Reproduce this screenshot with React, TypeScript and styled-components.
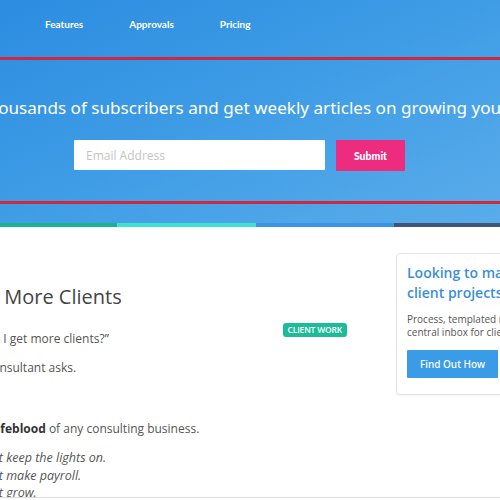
import React from "react";
import styled, { createGlobalStyle } from "styled-components";

const Global = createGlobalStyle`
  html, body { margin: 0; padding: 0; background: #fff; overflow: hidden; }
  body { font-family: "Open Sans", "Liberation Sans", sans-serif; }
  * { box-sizing: border-box; }
`;

const Page = styled.div`
  width: 500px;
  height: 500px;
  overflow: hidden;
  position: relative;
  background: #fff;
`;

const Hero = styled.header`
  background: linear-gradient(to bottom right, #2c8ce0 0%, #3f9de6 50%, #5aacea 100%);
  padding-bottom: 19px;
`;

const Nav = styled.nav`
  display: flex;
  gap: 46px;
  padding: 16px 0 0 45px;
  height: 57px;
`;

const NavItem = styled.a`
  font-family: "Lato", "Open Sans", sans-serif;
  font-size: 10px;
  font-weight: 700;
  line-height: 16px;
  color: #fff;
  text-decoration: none;
`;

const Subscribe = styled.section`
  border-top: 3px solid #cd2a3f;
  border-bottom: 3px solid #cd2a3f;
  padding: 35px 0 30px;
  overflow: hidden;
`;

const Headline = styled.h2`
  margin: 0;
  font-family: "Noto Sans", "Open Sans", sans-serif;
  font-weight: 400;
  font-size: 17.1px;
  line-height: 26px;
  color: #fff;
  white-space: nowrap;
  text-indent: -53px;
`;

const Form = styled.form`
  display: flex;
  gap: 11px;
  margin: 19px 0 0 74px;
`;

const EmailInput = styled.input`
  width: 251px;
  height: 30px;
  border: none;
  border-radius: 1px;
  padding: 0 12px;
  font-family: "Open Sans", sans-serif;
  font-size: 12px;
  color: #333;
  background: #fff;
  outline: none;
  &::placeholder { color: #c4c4c4; }
`;

const SubmitButton = styled.button`
  width: 69px;
  height: 31px;
  border: none;
  border-radius: 1px;
  background: #ee2c7f;
  color: #fff;
  font-family: "Lato", "Open Sans", sans-serif;
  font-weight: 900;
  font-size: 10.5px;
`;

const Stripes = styled.div`
  display: grid;
  grid-template-columns: 117px 139px 138px 1fr;
  height: 4px;
`;

const Stripe = styled.div<{ $c: string }>`
  background: ${(p) => p.$c};
`;

const Main = styled.main`
  display: flex;
  gap: 49px;
  padding-top: 26px;
`;

const Article = styled.article`
  flex: 0 0 394px;
  margin-left: -47px;
  padding-top: 30px;
  font-family: "Open Sans", sans-serif;
  color: #555;
`;

const Title = styled.h1`
  margin: 0;
  font-size: 20px;
  font-weight: 400;
  line-height: 28px;
  color: #444;
  white-space: nowrap;
`;

const LeadRow = styled.div`
  display: flex;
  justify-content: space-between;
  align-items: flex-start;
  margin-top: 12px;
`;

const Badge = styled.span`
  display: inline-block;
  height: 14px;
  padding: 0 5px;
  border-radius: 3px;
  background: #1dbb98;
  color: #fff;
  font-size: 8.5px;
  font-weight: 600;
  line-height: 14px;
  text-transform: uppercase;
  letter-spacing: -0.2px;
`;

const Para = styled.p<{ $mt?: number }>`
  margin: ${(p) => p.$mt ?? 0}px 0 0;
  font-size: 12px;
  line-height: 20px;
  white-space: nowrap;
  strong { font-weight: 700; color: #333; }
`;

const Lead = styled(Para)`
  padding-top: 6px;
`;

const Quotes = styled.p`
  margin: 10px 0 0;
  font-size: 12.5px;
  line-height: 17.5px;
  font-style: italic;
  white-space: nowrap;
`;

const Sidebar = styled.aside`
  flex: 0 0 auto;
`;

const Card = styled.div`
  width: 230px;
  border: 1px solid #e6e6e6;
  border-radius: 4px;
  padding: 9px 10px 16px 10px;
  box-shadow: 0 1px 2px rgba(0, 0, 0, 0.05);
  background: #fff;
`;

const CardTitle = styled.h3`
  margin: 0;
  font-family: "Open Sans", sans-serif;
  font-weight: 600;
  font-size: 14px;
  line-height: 20px;
  color: #3b8fd8;
  white-space: nowrap;
`;

const CardText = styled.p`
  margin: 10px 0 0;
  font-family: "Open Sans", sans-serif;
  font-size: 10px;
  line-height: 13px;
  color: #555;
  white-space: nowrap;
`;

const CardButton = styled.button`
  display: block;
  margin-top: 11px;
  width: 91px;
  height: 28px;
  border: none;
  border-radius: 1px;
  background: #3a9be7;
  color: #fff;
  font-family: "Noto Sans", "Open Sans", sans-serif;
  font-weight: 500;
  font-size: 10px;
`;

const BottomBar = styled.div`
  position: absolute;
  left: 0;
  right: 0;
  bottom: 0;
  height: 3px;
  background: #fff;
  border-top: 1px solid #dcdcdc;
`;

export default function App() {
  return (
    <Page>
      <Global />
      <Hero>
        <Nav>
          <NavItem href="#">Features</NavItem>
          <NavItem href="#">Approvals</NavItem>
          <NavItem href="#">Pricing</NavItem>
        </Nav>
        <Subscribe>
          <Headline>Join thousands of subscribers and get weekly articles on growing your business</Headline>
          <Form onSubmit={(e) => e.preventDefault()}>
            <EmailInput type="email" placeholder="Email Address" />
            <SubmitButton type="submit">Submit</SubmitButton>
          </Form>
        </Subscribe>
      </Hero>
      <Stripes>
        <Stripe $c="#1ab395" />
        <Stripe $c="#3ee2d2" />
        <Stripe $c="#3a94e2" />
        <Stripe $c="#3d5679" />
      </Stripes>
      <Main>
        <Article>
          <Title>Land More Clients</Title>
          <LeadRow>
            <Lead>“How do I get more clients?”</Lead>
            <Badge>Client Work</Badge>
          </LeadRow>
          <Para $mt={9}>Every consultant asks.</Para>
          <Para $mt={41}>
            It’s the <strong>lifeblood</strong> of any consulting business.
          </Para>
          <Quotes>
            You can’t keep the lights on.
            <br />
            You can’t make payroll.
            <br />
            You can’t grow.
          </Quotes>
        </Article>
        <Sidebar>
          <Card>
            <CardTitle>
              Looking to manage your
              <br />
              client projects better?
            </CardTitle>
            <CardText>
              Process, templated requests and a
              <br />
              central inbox for client feedback.
            </CardText>
            <CardButton>Find Out How</CardButton>
          </Card>
        </Sidebar>
      </Main>
      <BottomBar />
    </Page>
  );
}
